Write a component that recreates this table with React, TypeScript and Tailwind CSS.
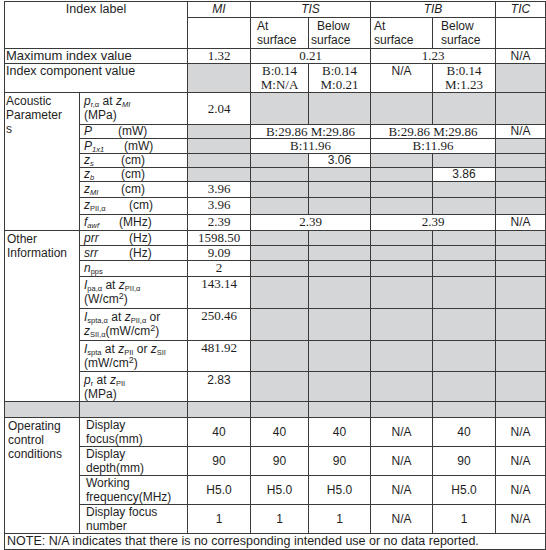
import type { ReactNode } from 'react';

const serif = "font-['Liberation_Serif','Times_New_Roman',serif] text-[13px]";
const gray = 'bg-[#d5d6d8]';

type CellProps = {
  children?: ReactNode;
  className?: string;
  colSpan?: number;
  rowSpan?: number;
  mid?: boolean;
};

function C({ children, className = '', colSpan, rowSpan, mid }: CellProps) {
  return (
    <td
      colSpan={colSpan}
      rowSpan={rowSpan}
      className={`border border-[#3a3a3a] p-0 ${mid ? 'align-middle' : 'align-top'} ${className}`}
    >
      {children}
    </td>
  );
}

function Grey({ n = 1 }: { n?: number }) {
  return (
    <>
      {Array.from({ length: n }).map((_, i) => (
        <C key={i} className={gray} />
      ))}
    </>
  );
}

// symbol with subscript, e.g. z_MI
function S({ b, s, up }: { b: string; s?: string; up?: boolean }) {
  return (
    <>
      <i>{b}</i>
      {s && <sub className={`text-[7.5px] ${up ? '' : 'italic'}`}>{s}</sub>}
    </>
  );
}

// parameter name with unit tab
function Param({ sym, unit, w }: { sym: ReactNode; unit: string; w: string }) {
  return (
    <C className="pl-[4px]">
      <span className={`inline-block ${w}`}>{sym}</span>
      {unit}
    </C>
  );
}

function OpRow({ label, v }: { label: ReactNode; v: string[] }) {
  return (
    <>
      <C className="pl-[6px]">{label}</C>
      {v.map((x, i) => (
        <C key={i} mid className="text-center">{x}</C>
      ))}
    </>
  );
}

export default function App() {
  return (
    <div className="min-h-screen bg-white pl-[4px] pt-[1px] font-['Liberation_Sans',Arial,sans-serif] text-[12px] leading-[14px] text-[#1e1e1e]">
      <table className="w-[541px] table-fixed border-collapse">
        <colgroup>
          <col className="w-[75px]" />
          <col className="w-[108px]" />
          <col className="w-[63px]" />
          <col className="w-[58px]" />
          <col className="w-[62px]" />
          <col className="w-[62px]" />
          <col className="w-[63px]" />
          <col className="w-[50px]" />
        </colgroup>
        <tbody>
          <tr className="h-[16px]">
            <C colSpan={2} rowSpan={2} className="text-center text-[12.5px]">Index label</C>
            <C className="text-center italic">MI</C>
            <C colSpan={2} className="text-center italic">TIS</C>
            <C colSpan={2} className="text-center italic">TIB</C>
            <C className="text-center italic">TIC</C>
          </tr>
          <tr className="h-[31px]">
            <C />
            <C className="pl-[6px] pt-[1px]">At<br />surface</C>
            <C className="pl-[2px] pt-[1px]"><span className="pl-[6px]">Below</span><br />surface</C>
            <C className="pl-[3px] pt-[1px]">At<br />surface</C>
            <C className="pl-[8px] pt-[1px]">Below<br />surface</C>
            <C />
          </tr>
          <tr className="h-[15px]">
            <C colSpan={2} className="pl-[1px] text-[13px]">Maximum index value</C>
            <C className={`text-center ${serif}`}>1.32</C>
            <C colSpan={2} className={`text-center ${serif}`}>0.21</C>
            <C colSpan={2} className={`text-center ${serif}`}>1.23</C>
            <C className="text-center">N/A</C>
          </tr>
          <tr className="h-[29px]">
            <C colSpan={2} className="pl-[1px] text-[12.5px]">Index component value</C>
            <Grey />
            <C className={`text-center ${serif}`}>B:0.14<br />M:N/A</C>
            <C className={`text-center ${serif}`}>B:0.14<br />M:0.21</C>
            <C className="text-center">N/A</C>
            <C className={`text-center ${serif}`}>B:0.14<br />M:1.23</C>
            <Grey />
          </tr>

          {/* Acoustic parameters */}
          <tr className="h-[32px]">
            <C rowSpan={8} className="pl-[1px] pt-[1px]">Acoustic<br />Parameter<br />s</C>
            <C className="pl-[4px] pt-[1px]">
              <S b="p" s="r,α" up /> at <S b="z" s="MI" /><br />(MPa)
            </C>
            <C mid className={`text-center ${serif}`}>2.04</C>
            <Grey n={5} />
          </tr>
          <tr className="h-[14px] leading-[13px]">
            <Param sym={<S b="P" />} unit="(mW)" w="w-[34px]" />
            <Grey />
            <C colSpan={2} className={`text-center ${serif} leading-[13px]`}>B:29.86 M:29.86</C>
            <C colSpan={2} className={`text-center ${serif} leading-[13px]`}>B:29.86 M:29.86</C>
            <C className="text-center">N/A</C>
          </tr>
          <tr className="h-[15px]">
            <Param sym={<S b="P" s="1x1" />} unit="(mW)" w="w-[40px]" />
            <Grey />
            <C colSpan={2} className={`text-center ${serif} leading-[14px]`}>B:11.96</C>
            <C colSpan={2} className={`text-center ${serif} leading-[14px]`}>B:11.96</C>
            <Grey />
          </tr>
          <tr className="h-[14px] leading-[13px]">
            <Param sym={<S b="z" s="s" />} unit="(cm)" w="w-[37px]" />
            <Grey n={2} />
            <C className="text-center">3.06</C>
            <Grey n={3} />
          </tr>
          <tr className="h-[14px] leading-[13px]">
            <Param sym={<S b="z" s="b" />} unit="(cm)" w="w-[37px]" />
            <Grey n={4} />
            <C className="text-center">3.86</C>
            <Grey />
          </tr>
          <tr className="h-[16px]">
            <Param sym={<S b="z" s="MI" />} unit="(cm)" w="w-[37px]" />
            <C className={`text-center ${serif}`}>3.96</C>
            <Grey n={5} />
          </tr>
          <tr className="h-[17px]">
            <Param sym={<S b="z" s="PII,α" up />} unit="(cm)" w="w-[45px]" />
            <C className={`text-center ${serif}`}>3.96</C>
            <Grey n={5} />
          </tr>
          <tr className="h-[16px]">
            <Param sym={<S b="f" s="awf" />} unit="(MHz)" w="w-[35px]" />
            <C className={`text-center ${serif}`}>2.39</C>
            <C colSpan={2} className={`text-center ${serif}`}>2.39</C>
            <C colSpan={2} className={`text-center ${serif}`}>2.39</C>
            <C className="text-center">N/A</C>
          </tr>

          {/* Other information */}
          <tr className="h-[15px]">
            <C rowSpan={7} className="pl-[2px] pt-[1px]">Other<br />Information</C>
            <Param sym={<i>prr</i>} unit="(Hz)" w="w-[45px]" />
            <C className={`text-center ${serif}`}>1598.50</C>
            <Grey n={5} />
          </tr>
          <tr className="h-[15px]">
            <Param sym={<i>srr</i>} unit="(Hz)" w="w-[45px]" />
            <C className={`text-center ${serif}`}>9.09</C>
            <Grey n={5} />
          </tr>
          <tr className="h-[16px]">
            <C className="pl-[4px]"><S b="n" s="pps" up /></C>
            <C className={`text-center ${serif}`}>2</C>
            <Grey n={5} />
          </tr>
          <tr className="h-[32px]">
            <C className="pl-[4px] pt-[1px]">
              <S b="I" s="pa,α" up /> at <S b="z" s="PII,α" up /><br />(W/cm<sup>2</sup>)
            </C>
            <C className={`text-center ${serif}`}>143.14</C>
            <Grey n={5} />
          </tr>
          <tr className="h-[32px]">
            <C className="pl-[4px] pt-[1px]">
              <S b="I" s="spta,α" up /> at <S b="z" s="PII,α" up /> or<br />
              <S b="z" s="SII,α" up />(mW/cm<sup>2</sup>)
            </C>
            <C className={`text-center ${serif}`}>250.46</C>
            <Grey n={5} />
          </tr>
          <tr className="h-[31px]">
            <C className="pl-[4px] pt-[1px]">
              <S b="I" s="spta" up /> at <S b="z" s="PII" up /> or <S b="z" s="SII" up /><br />(mW/cm<sup>2</sup>)
            </C>
            <C className={`text-center ${serif}`}>481.92</C>
            <Grey n={5} />
          </tr>
          <tr className="h-[30px]">
            <C className="pl-[4px] pt-[1px]">
              <S b="p" s="r" up /> at <S b="z" s="PII" up /><br />(MPa)
            </C>
            <C className="pt-[1px] text-center">2.83</C>
            <Grey n={5} />
          </tr>

          <tr className="h-[16px]">
            <Grey n={8} />
          </tr>

          {/* Operating control conditions */}
          <tr className="h-[29px]">
            <C rowSpan={4} className="pl-[3px] pt-[1px]">Operating<br />control<br />conditions</C>
            <OpRow label={<>Display<br />focus(mm)</>} v={['40', '40', '40', 'N/A', '40', 'N/A']} />
          </tr>
          <tr className="h-[29px]">
            <OpRow label={<>Display<br />depth(mm)</>} v={['90', '90', '90', 'N/A', '90', 'N/A']} />
          </tr>
          <tr className="h-[28px]">
            <OpRow label={<>Working<br />frequency(MHz)</>} v={['H5.0', 'H5.0', 'H5.0', 'N/A', 'H5.0', 'N/A']} />
          </tr>
          <tr className="h-[28px]">
            <OpRow label={<>Display focus<br />number</>} v={['1', '1', '1', 'N/A', '1', 'N/A']} />
          </tr>
          <tr className="h-[16px]">
            <C colSpan={8} className="pl-[2px] text-[12.5px]">
              NOTE: N/A indicates that there is no corresponding intended use or no data reported.
            </C>
          </tr>
        </tbody>
      </table>
    </div>
  );
}
